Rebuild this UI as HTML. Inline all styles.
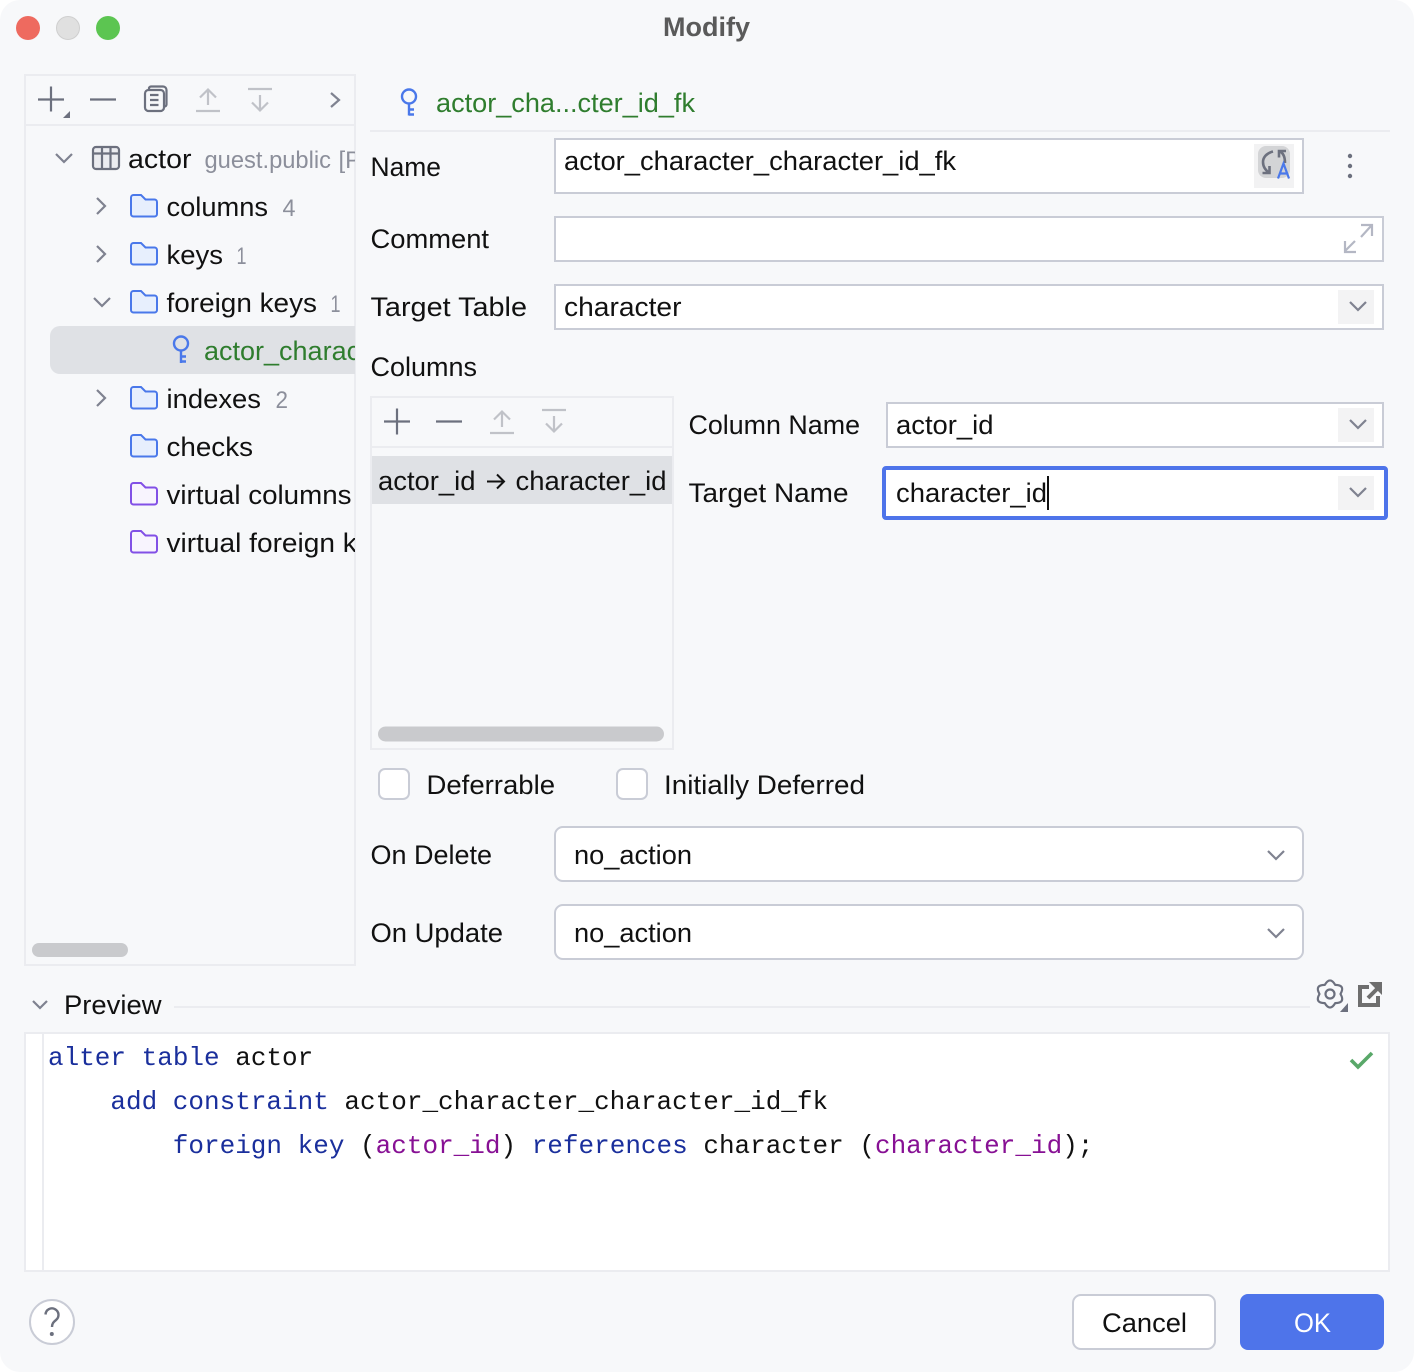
<!DOCTYPE html>
<html><head><meta charset="utf-8"><title>Modify</title>
<style>
html,body{margin:0;padding:0;background:#fff;width:1414px;height:1372px;overflow:hidden}
svg{display:block}
text{font-family:"Liberation Sans",sans-serif;font-size:27px;fill:#111}
.m{font-family:"Liberation Mono",monospace;font-size:26px;fill:#111}
.k{fill:#1a2f9c}.c{fill:#871094}
.g{fill:#8c8f9b}
.gr{fill:#2f7d2e}
.i{fill:none;stroke:#6c707e;stroke-width:2.2}
.d{fill:none;stroke:#c0c2c8;stroke-width:2.2}
.chev{fill:none;stroke:#7f8290;stroke-width:2.2}
.b{fill:#fff;stroke:#c9ccd6;stroke-width:2}
.p{fill:none;stroke:#ebecf0;stroke-width:2}
.fb{fill:#e7effd;stroke:#4a78ea;stroke-width:2}
.fv{fill:#f8f4fe;stroke:#8250e6;stroke-width:2}
.key{fill:none;stroke:#4a78ea;stroke-width:2.4}
</style></head>
<body>
<svg width="1414" height="1372" viewBox="0 0 1414 1372" xmlns="http://www.w3.org/2000/svg">
<defs>
<clipPath id="tree"><rect x="26" y="126" width="329" height="838"/></clipPath>
<path id="fo" d="M131 197.500a2.500 2.500 0 0 1 2.500-2.500h7.500l4.500 4.500h9a2.500 2.500 0 0 1 2.500 2.500v12a2.500 2.500 0 0 1-2.500 2.500h-21a2.500 2.500 0 0 1-2.500-2.500z"/>
</defs>
<rect x="0" y="0" width="1414" height="1372" rx="20" fill="#f7f8fa"/>

<!-- window controls -->
<circle cx="28" cy="28" r="12" fill="#ee6a5f"/>
<circle cx="68" cy="28" r="11.500" fill="#e0e0e0" stroke="#cfcfcf"/>
<circle cx="108" cy="28" r="12" fill="#5cc551"/>
<text x="663" y="36" textLength="87" lengthAdjust="spacingAndGlyphs" style="font-weight:700;fill:#5a5a5a">Modify</text>

<!-- left panel -->
<rect x="25" y="75" width="330" height="890" class="p"/>
<line x1="26" y1="125" x2="355" y2="125" class="p"/>
<path d="M38 99.500h26M51 86.500v25" class="i"/>
<path d="M70 111v7h-7z" fill="#6c707e"/>
<path d="M90 99.500h26" class="i"/>
<rect x="145" y="90" width="19" height="21" rx="3.500" class="i"/>
<path d="M149 89.500v-1a2 2 0 0 1 2-2h12a3.500 3.500 0 0 1 3.500 3.500v14.500a2 2 0 0 1-2 2" class="i"/>
<path d="M150 95h8.500M150 100h8.500M150 105h8.500" class="i"/>
<path d="M196 111h24M208 105V90M200 97.500l8-8 8 8" class="d"/>
<path d="M248 89h24M260 95v15M252 102.500l8 8 8-8" class="d"/>
<path d="M331 93l8 7-8 7" class="chev"/>

<!-- tree -->
<rect x="50" y="326" width="305" height="48" rx="10" fill="#dfe1e5"/>
<rect x="345" y="326" width="10" height="48" fill="#dfe1e5"/>
<g clip-path="url(#tree)">
<path d="M56 154l8 8 8-8" class="chev"/>
<rect x="93" y="147" width="26" height="22" rx="3" fill="#ebecf0" stroke="#6c707e" stroke-width="2.200"/>
<path d="M93 153.500h26M102 148v20M110.500 148v20" class="i"/>
<text x="128" y="168" textLength="63.500" lengthAdjust="spacingAndGlyphs">actor</text>
<text x="204.500" y="168" textLength="126.500" lengthAdjust="spacingAndGlyphs" class="g" style="font-size:24px">guest.public</text>
<text x="338.500" y="168" class="g" style="font-size:24px">[PostgreSQL]</text>

<path d="M97 198l8 8-8 8" class="chev"/>
<use href="#fo" class="fb"/>
<text x="166.500" y="216" textLength="101.500" lengthAdjust="spacingAndGlyphs">columns</text>
<text x="282.500" y="216" textLength="13" lengthAdjust="spacingAndGlyphs" class="g" style="font-size:24px">4</text>

<path d="M97 246l8 8-8 8" class="chev"/>
<use href="#fo" y="48" class="fb"/>
<text x="166.500" y="264" textLength="56.500" lengthAdjust="spacingAndGlyphs">keys</text>
<text x="236.500" y="264" textLength="10" lengthAdjust="spacingAndGlyphs" class="g" style="font-size:24px">1</text>

<path d="M94 298l8 8 8-8" class="chev"/>
<use href="#fo" y="96" class="fb"/>
<text x="166.500" y="312" textLength="150.500" lengthAdjust="spacingAndGlyphs">foreign keys</text>
<text x="330.500" y="312" textLength="10" lengthAdjust="spacingAndGlyphs" class="g" style="font-size:24px">1</text>

<circle cx="181" cy="343.500" r="7" class="key"/>
<path d="M181 350.500v12.500M181 356.500h5M181 361.500h5" class="key"/>
<text x="204" y="360" class="gr">actor_character_character_id_fk</text>

<path d="M97 390l8 8-8 8" class="chev"/>
<use href="#fo" y="192" class="fb"/>
<text x="166.500" y="408" textLength="94.500" lengthAdjust="spacingAndGlyphs">indexes</text>
<text x="275.500" y="408" textLength="12.500" lengthAdjust="spacingAndGlyphs" class="g" style="font-size:24px">2</text>

<use href="#fo" y="240" class="fb"/>
<text x="166.500" y="456" textLength="86.500" lengthAdjust="spacingAndGlyphs">checks</text>

<use href="#fo" y="288" class="fv"/>
<text x="166.500" y="504" textLength="185" lengthAdjust="spacingAndGlyphs">virtual columns</text>

<use href="#fo" y="336" class="fv"/>
<text x="166.500" y="552" textLength="234" lengthAdjust="spacingAndGlyphs">virtual foreign keys</text>
</g>
<rect x="32" y="943" width="96" height="14" rx="7" fill="#c9cacd"/>

<!-- right header -->
<circle cx="409" cy="96.500" r="7" class="key"/>
<path d="M409 103.500v12M409 109.500h5M409 114.500h5" class="key"/>
<text x="436" y="112" textLength="259" lengthAdjust="spacingAndGlyphs" class="gr">actor_cha...cter_id_fk</text>
<line x1="370" y1="131" x2="1390" y2="131" class="p"/>

<!-- name -->
<text x="370.500" y="176" textLength="70.500" lengthAdjust="spacingAndGlyphs">Name</text>
<rect x="555" y="139" width="748" height="54" class="b"/>
<text x="564" y="170" textLength="392" lengthAdjust="spacingAndGlyphs">actor_character_character_id_fk</text>
<rect x="1254" y="144" width="40" height="44" fill="#f2f2f3"/>
<rect x="1258" y="146" width="32" height="32" rx="8" fill="#d3d4d6"/>
<path d="M1273 151.500c-6 1.500-10 5.500-10 10.500 0 4 2 8 6.500 11M1262.500 173h7v-7" fill="none" stroke="#6c707e" stroke-width="2.600"/>
<path d="M1285 163c0-6-2-10.500-6-12M1286 151h-7v6.500" fill="none" stroke="#6c707e" stroke-width="2.600"/>
<path d="M1278 178.500l5.500-15 5.500 15M1280 173.500h7" fill="none" stroke="#4a78ea" stroke-width="2.200"/>
<circle cx="1350" cy="156" r="2.200" fill="#6c707e"/>
<circle cx="1350" cy="166" r="2.200" fill="#6c707e"/>
<circle cx="1350" cy="176" r="2.200" fill="#6c707e"/>

<!-- comment -->
<text x="370.500" y="248" textLength="118.500" lengthAdjust="spacingAndGlyphs">Comment</text>
<rect x="555" y="217" width="828" height="44" class="b"/>
<path d="M1361 237l10-11M1361 225h11v11M1355 241l-10 10M1345 241v11h11" fill="none" stroke="#b4b7c4" stroke-width="2.200"/>

<!-- target table -->
<text x="370.500" y="316" textLength="156.500" lengthAdjust="spacingAndGlyphs">Target Table</text>
<rect x="555" y="285" width="828" height="44" class="b"/>
<text x="564" y="316" textLength="117.500" lengthAdjust="spacingAndGlyphs">character</text>
<rect x="1338" y="290" width="36" height="34" fill="#f3f3f4"/>
<path d="M1350 302l8 8 8-8" class="chev"/>

<text x="370.500" y="376" textLength="106.500" lengthAdjust="spacingAndGlyphs">Columns</text>

<!-- columns list -->
<rect x="371" y="397" width="302" height="352" class="p"/>
<line x1="372" y1="447" x2="672" y2="447" class="p"/>
<path d="M384 421.500h26M397 408.500v26" class="i"/>
<path d="M436 421.500h26" class="i"/>
<path d="M490 433h24M502 427v-15M494 419.500l8-8 8 8" class="d"/>
<path d="M542 410h24M554 416v15M546 423.500l8 8 8-8" class="d"/>
<rect x="372" y="456" width="300" height="48" fill="#dfe1e5"/>
<text x="378" y="490" textLength="97.500" lengthAdjust="spacingAndGlyphs">actor_id</text>
<path d="M487 481.500h17M497 474.500l7 7-7 7" fill="none" stroke="#111" stroke-width="2"/>
<text x="515.500" y="490" textLength="151" lengthAdjust="spacingAndGlyphs">character_id</text>
<rect x="378" y="726.500" width="286" height="15" rx="7.500" fill="#c9cacd"/>

<!-- column fields -->
<text x="688.500" y="434" textLength="171.500" lengthAdjust="spacingAndGlyphs">Column Name</text>
<rect x="887" y="403" width="496" height="44" class="b"/>
<text x="896" y="434" textLength="97.500" lengthAdjust="spacingAndGlyphs">actor_id</text>
<rect x="1338" y="408" width="36" height="34" fill="#f3f3f4"/>
<path d="M1350 420l8 8 8-8" class="chev"/>

<text x="688.500" y="502" textLength="160" lengthAdjust="spacingAndGlyphs">Target Name</text>
<rect x="884" y="468" width="502" height="50" rx="2" fill="#fff" stroke="#4e74ea" stroke-width="4"/>
<text x="896" y="502" textLength="151" lengthAdjust="spacingAndGlyphs">character_id</text>
<rect x="1047" y="476" width="2" height="34" fill="#111"/>
<rect x="1338" y="476" width="36" height="34" fill="#f3f3f4"/>
<path d="M1350 488l8 8 8-8" class="chev"/>

<!-- checkboxes -->
<rect x="379" y="769" width="30" height="30" rx="6" class="b"/>
<text x="426.500" y="794" textLength="128.500" lengthAdjust="spacingAndGlyphs">Deferrable</text>
<rect x="617" y="769" width="30" height="30" rx="6" class="b"/>
<text x="664" y="794" textLength="201" lengthAdjust="spacingAndGlyphs">Initially Deferred</text>

<!-- on delete/update -->
<text x="370.500" y="864" textLength="121.500" lengthAdjust="spacingAndGlyphs">On Delete</text>
<rect x="555" y="827" width="748" height="54" rx="8" class="b"/>
<text x="574" y="864" textLength="118" lengthAdjust="spacingAndGlyphs">no_action</text>
<path d="M1268 851l8 8 8-8" class="chev"/>
<text x="370.500" y="942" textLength="132.500" lengthAdjust="spacingAndGlyphs">On Update</text>
<rect x="555" y="905" width="748" height="54" rx="8" class="b"/>
<text x="574" y="942" textLength="118" lengthAdjust="spacingAndGlyphs">no_action</text>
<path d="M1268 929l8 8 8-8" class="chev"/>

<!-- preview -->
<path d="M33 1001l7 7 7-7" class="chev"/>
<text x="64" y="1014" textLength="97.500" lengthAdjust="spacingAndGlyphs">Preview</text>
<line x1="174" y1="1007" x2="1310" y2="1007" class="p"/>
<path d="M1324.750 984.910Q1330 976 1335.250 984.910Q1345.600 985 1340.500 994Q1345.600 1003 1335.250 1003.090Q1330 1012 1324.750 1003.090Q1314.400 1003 1319.500 994Q1314.400 985 1324.750 984.910Z" fill="none" stroke="#6c707e" stroke-width="2.200" stroke-linejoin="round"/>
<circle cx="1330" cy="994" r="4.500" fill="none" stroke="#6c707e" stroke-width="2.200"/>
<path d="M1348 1003v9h-8z" fill="#6c707e"/>
<path d="M1369 987h-9v18h18v-9" fill="none" stroke="#6e6e6e" stroke-width="4"/>
<path d="M1368 998l11-11" fill="none" stroke="#6e6e6e" stroke-width="4"/>
<path d="M1369 982h13v13z" fill="#6e6e6e"/>

<rect x="25" y="1033" width="1364" height="238" fill="#fff" stroke="#ebecf0" stroke-width="2"/>
<line x1="43" y1="1034" x2="43" y2="1270" stroke="#ebecf0" stroke-width="2"/>
<path d="M1351 1060l7 7 14-14" fill="none" stroke="#59a869" stroke-width="3.600"/>
<text class="m" x="48" y="1065" xml:space="preserve"><tspan class="k">alter table</tspan> actor</text>
<text class="m" x="110.400" y="1109" xml:space="preserve"><tspan class="k">add constraint</tspan> actor_character_character_id_fk</text>
<text class="m" x="172.800" y="1153" xml:space="preserve"><tspan class="k">foreign key</tspan> (<tspan class="c">actor_id</tspan>) <tspan class="k">references</tspan> character (<tspan class="c">character_id</tspan>);</text>

<!-- footer -->
<circle cx="52" cy="1322" r="22" fill="#fff" stroke="#c9ccd6" stroke-width="2"/>
<path d="M45.500 1314.500a6.500 6.500 0 1 1 10.500 5.500c-2.500 2-4 3.500-4 7" fill="none" stroke="#6c707e" stroke-width="2.400"/>
<circle cx="51.800" cy="1334" r="2" fill="#6c707e"/>
<rect x="1073" y="1295" width="142" height="54" rx="8" class="b"/>
<text x="1102" y="1332" textLength="85" lengthAdjust="spacingAndGlyphs">Cancel</text>
<rect x="1240" y="1294" width="144" height="56" rx="8" fill="#4e74ea"/>
<text x="1294" y="1332" textLength="37" lengthAdjust="spacingAndGlyphs" style="fill:#fff">OK</text>
</svg>
</body></html>
